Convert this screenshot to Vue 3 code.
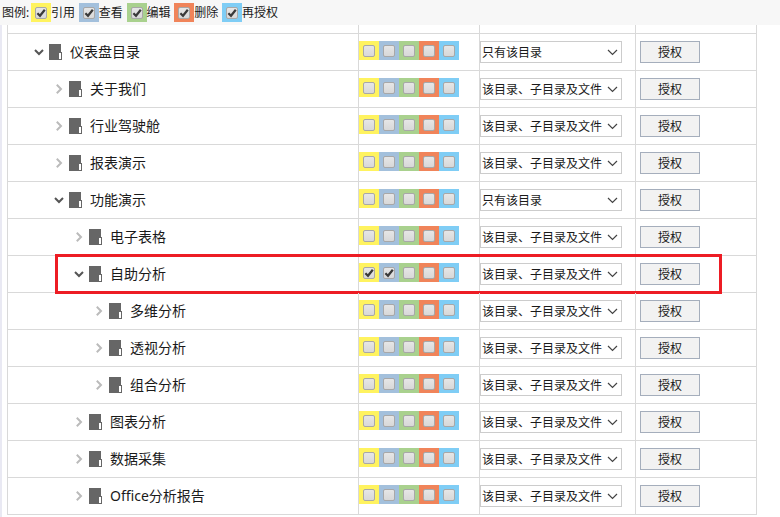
<template>
  <div class="page">
    <div class="legend">
      <span class="legend-title">图例:</span>
      <span v-for="p in perms" :key="p.name" class="legend-item">
        <span class="swatch" :class="p.cls"><span class="box"><svg viewBox="0 0 10 10" class="tick"><path d="M1.4 5.2 4 7.8 8.8 1.8" /></svg></span></span>
        <span class="legend-name">{{ p.name }}</span>
      </span>
    </div>
    <div class="body">
      <div class="table">
        <div class="row stub">
          <div class="cell"></div><div class="cell"></div><div class="cell"></div><div class="cell"></div>
        </div>
        <div v-for="row in rows" :key="row.name" class="row" :class="{ active: row.active }">
          <div class="cell name" :style="{ paddingLeft: 26 + row.level * 20 + 'px' }">
            <svg class="chev" :class="{ open: row.open }" viewBox="0 0 10 10">
              <path v-if="row.open" d="M1 3 5 7 9 3" />
              <path v-else d="M2.8 0.8 7 5 2.8 9.2" />
            </svg>
            <svg class="doc" viewBox="0 0 13 16">
              <path d="M0 0H12V8H9V16H0Z" fill="#666" />
              <rect x="9.5" y="8.5" width="3" height="7" fill="#fff" stroke="#666" />
            </svg>
            <span class="label">{{ row.name }}</span>
          </div>
          <div class="cell checks">
            <span v-for="(p, i) in perms" :key="p.name" class="swatch" :class="p.cls">
              <span class="box"><svg v-if="row.checked && i < 2" viewBox="0 0 10 10" class="tick"><path d="M1.4 5.2 4 7.8 8.8 1.8" /></svg></span>
            </span>
          </div>
          <div class="cell scope">
            <div class="select-wrap">
              <select class="select">
                <option>{{ row.open && !row.active ? '只有该目录' : '该目录、子目录及文件' }}</option>
              </select>
              <svg class="arrow" viewBox="0 0 11 7"><path d="M1 1 5.5 5.5 10 1" /></svg>
            </div>
          </div>
          <div class="cell action"><button class="grant">授权</button></div>
          <div v-if="row.active" class="highlight"></div>
        </div>
      </div>
    </div>
  </div>
</template>

<script setup>
const perms = [
  { name: "引用", cls: "yellow" },
  { name: "查看", cls: "steel" },
  { name: "编辑", cls: "green" },
  { name: "删除", cls: "orange" },
  { name: "再授权", cls: "sky" },
];

const rows = [
  { name: "仪表盘目录", level: 0, open: true },
  { name: "关于我们", level: 1 },
  { name: "行业驾驶舱", level: 1 },
  { name: "报表演示", level: 1 },
  { name: "功能演示", level: 1, open: true },
  { name: "电子表格", level: 2 },
  { name: "自助分析", level: 2, open: true, active: true, checked: true },
  { name: "多维分析", level: 3 },
  { name: "透视分析", level: 3 },
  { name: "组合分析", level: 3 },
  { name: "图表分析", level: 2 },
  { name: "数据采集", level: 2 },
  { name: "Office分析报告", level: 2 },
];
</script>

<style>
html, body { margin: 0; background: #fff; }
</style>

<style scoped>
.page {
  width: 780px;
  height: 517px;
  overflow: hidden;
  background: #fff;
  color: #1a1a1a;
  font-family: "Noto Sans", "Noto Sans CJK SC", sans-serif;
}
.legend {
  height: 25px;
  box-sizing: border-box;
  padding: 3px 0 0 2px;
  display: flex;
  background: #f7f7f7;
  font-size: 12px;
}
.legend-title { width: 29px; line-height: 20px; }
.legend-item { display: flex; margin-right: 3.75px; }
.legend-name { line-height: 20px; }
.body {
  box-sizing: border-box;
  height: 492px;
  padding-left: 5px;
  border-left: 2px solid #e9e9f3;
}
.table {
  width: 750px;
  border-left: 1px solid #d9d9d9;
  border-right: 1px solid #d9d9d9;
  box-sizing: border-box;
}
.row {
  position: relative;
  display: grid;
  grid-template-columns: 350px 121px 156px 121px;
  height: 37px;
  box-sizing: border-box;
  border-bottom: 1px solid #d9d9d9;
}
.row.stub { height: 9px; }
.cell {
  display: flex;
  align-items: center;
  box-sizing: border-box;
  border-left: 1px solid #d9d9d9;
}
.cell:first-child { border-left: none; }
.name { font-size: 14px; }
.chev {
  width: 10px;
  height: 10px;
  flex: none;
  fill: none;
  stroke: #bbb;
  stroke-width: 2;
}
.chev.open { stroke: #555; }
.doc { width: 13px; height: 16px; flex: none; margin-left: 5px; }
.label { margin-left: 8px; white-space: nowrap; position: relative; top: -1px; }
.checks { padding-bottom: 3px; }
.swatch {
  width: 20px;
  height: 19px;
  display: flex;
  align-items: center;
  justify-content: center;
  flex: none;
}
.yellow { background: #fff35f; }
.steel { background: #a3c0dc; }
.green { background: #a9d18e; }
.orange { background: #f0845a; }
.sky { background: #7fcdf5; }
.box {
  width: 10px;
  height: 10px;
  border: 1px solid #a8a8a8;
  border-radius: 2px;
  background: linear-gradient(#e6e6e6, #d8d8d8);
  display: block;
}
.tick {
  display: block;
  width: 10px;
  height: 10px;
  fill: none;
  stroke: #3a3a3a;
  stroke-width: 2.2;
}
.select-wrap { position: relative; width: 142px; height: 22px; }
.select {
  appearance: none;
  display: block;
  width: 142px;
  height: 22px;
  box-sizing: border-box;
  border: 1px solid #ccc;
  border-radius: 0;
  background: #fff;
  color: #1a1a1a;
  padding: 0 0 0 1px;
  font-family: inherit;
  font-size: 12px;
}
.arrow {
  position: absolute;
  right: 4px;
  top: 8px;
  width: 11px;
  height: 7px;
  fill: none;
  stroke: #444;
  stroke-width: 1.2;
}
.action { padding-left: 4px; }
.grant {
  width: 60px;
  height: 22px;
  box-sizing: border-box;
  border: 1px solid #a5aebc;
  border-radius: 0;
  background: #f2f2f2;
  color: #1a1a1a;
  padding: 0;
  font-family: inherit;
  font-size: 12px;
}
.highlight {
  position: absolute;
  left: 47px;
  top: -2px;
  width: 667px;
  height: 40px;
  box-sizing: border-box;
  border: 3px solid #ed1c24;
  pointer-events: none;
}
</style>
